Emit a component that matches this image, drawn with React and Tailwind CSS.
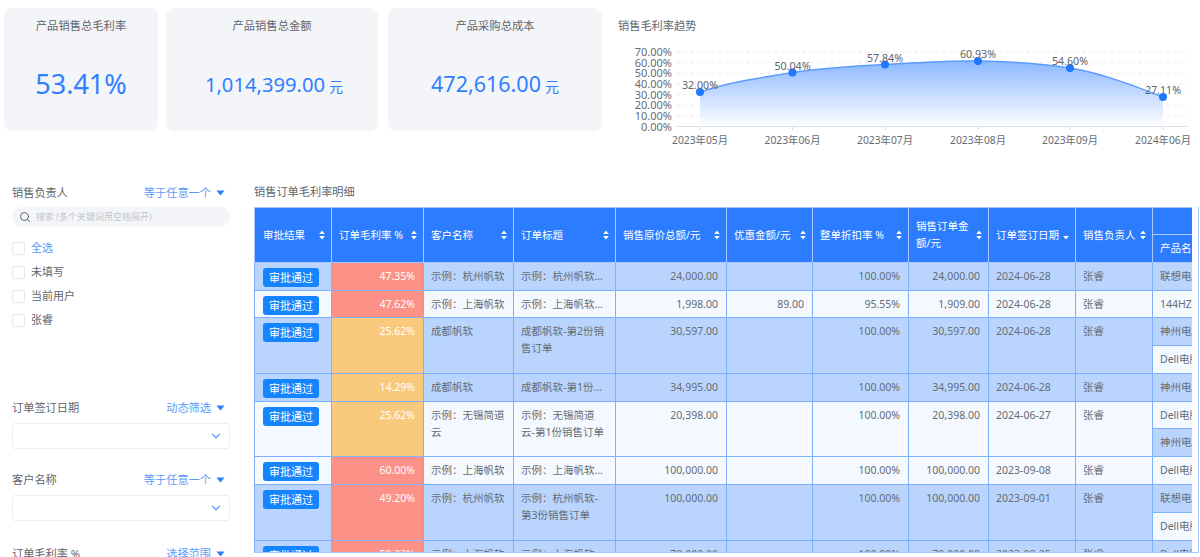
import React from "react";
import { Search, ChevronDown } from "lucide-react";

const Caret = () => (
  <svg width="9" height="6" viewBox="0 0 9 6" className="shrink-0 ml-[5px]"><path d="M0.5 0.5H8.5L4.5 5.5Z" fill="#2b7cff" /></svg>
);

const Sort = ({ onlyDown }) => (
  <svg width="6" height="10" viewBox="0 0 6 10" className="shrink-0">
    {!onlyDown && <path d="M3 0.5L5.8 4H0.2Z" fill="#fff" />}
    <path d="M3 9.5L5.8 6H0.2Z" fill="#fff" />
  </svg>
);

const Card = ({ title, className, children }) => (
  <div className={"flex flex-col items-center bg-[#f4f5f8] rounded-lg h-[123px] shrink-0 " + className}>
    <div className="text-[11.3px] leading-4 text-[#5f656d] mt-[10px]">{title}</div>
    <div className="mt-[32px] h-[36px] flex items-center text-[#2f7fff]">{children}</div>
  </div>
);

const pts = [
  [82, 53, "32.00%", "2023年05月"],
  [174.5, 33.5, "50.04%", "2023年06月"],
  [267, 25.5, "57.84%", "2023年07月"],
  [360, 22, "60.93%", "2023年08月"],
  [452, 29, "54.60%", "2023年09月"],
  [545, 58, "27.11%", "2024年06月"],
];
const curve = "M82 53C113 43 143 38.5 174.5 33.5C205 29 236 27 267 25.5C298 23.5 329 21.5 360 22C391 22.5 421 24 452 29C483 34 514 46 545 58";

const Chart = () => (
  <svg width="582" height="112" viewBox="0 0 582 112" className="block mt-[5px]">
    <defs>
      <linearGradient id="ga" x1="0" y1="0" x2="0" y2="1">
        <stop offset="0" stopColor="#8ab8ff" />
        <stop offset="1" stopColor="#ffffff" />
      </linearGradient>
    </defs>
    {[0, 1, 2, 3, 4, 5, 6, 7].map((i) => {
      const y = 87.5 - i * 10.65;
      return (
        <g key={i}>
          {i > 0 && <line x1="58" x2="570" y1={y} y2={y} stroke="#eeeeee" strokeDasharray="4 3" />}
          <text x="54" y={y + 4} textAnchor="end" fontSize="11" fill="#666c75">{i * 10}.00%</text>
        </g>
      );
    })}
    <path d={curve + "V87.5H82Z"} fill="url(#ga)" />
    <path d={curve} fill="none" stroke="#5d9bff" strokeWidth="1.5" />
    <line x1="58" x2="570" y1="87.5" y2="87.5" stroke="#dcdfe4" />
    {pts.map(([x, y, v, m]) => (
      <g key={m}>
        <line x1={x} x2={x} y1="87.5" y2="91" stroke="#dcdfe4" />
        <circle cx={x} cy={y} r="4" fill="#1f78ff" />
        <text x={x} y={y - 3} textAnchor="middle" fontSize="10.7" fill="#5e646e">{v}</text>
        <text x={x} y="105" textAnchor="middle" fontSize="10.3" fill="#666c75">{m}</text>
      </g>
    ))}
  </svg>
);

const FilterHead = ({ label, mode }) => (
  <div className="flex items-center justify-between h-4 pr-[5px]">
    <span className="text-[#5f656d] text-[11.2px]">{label}</span>
    <span className="flex items-center text-[#5b9bf8] text-[11.2px]">{mode}<Caret /></span>
  </div>
);

const Select = () => (
  <div className="mt-[7px] h-[26px] border border-[#eceef1] rounded-[3px] flex items-center justify-end pr-[6px]">
    <ChevronDown size={14} color="#5b9bf8" />
  </div>
);

const Check = ({ children, blue }) => (
  <div className="flex items-center h-6">
    <span className="w-[13px] h-[13px] border border-[#e6e8eb] rounded-[2px] mr-[6px]" />
    <span className={"text-[11px] " + (blue ? "text-[#5b9bf8]" : "text-[#5f656d]")}>{children}</span>
  </div>
);

const Filters = () => (
  <aside className="w-[218px] shrink-0 ml-3 pt-[25px]">
    <FilterHead label="销售负责人" mode="等于任意一个" />
    <div className="mt-[6px] h-5 rounded-full bg-[#f4f5f8] flex items-center pl-[7px]">
      <Search size={12} color="#5f6670" />
      <span className="ml-[5px] text-[9px] text-[#c3c6cc]">搜索 (多个关键词用空格隔开)</span>
    </div>
    <div className="mt-[9px]">
      <Check blue>全选</Check>
      <Check>未填写</Check>
      <Check>当前用户</Check>
      <Check>张睿</Check>
    </div>
    <div className="mt-[68px]">
      <FilterHead label="订单签订日期" mode="动态筛选" />
      <Select />
    </div>
    <div className="mt-[23px]">
      <FilterHead label="客户名称" mode="等于任意一个" />
      <Select />
    </div>
    <div className="mt-[25px]">
      <FilterHead label="订单毛利率 %" mode="选择范围" />
    </div>
  </aside>
);

const R = "bg-[#fb9187]";
const O = "bg-[#f9ca7d]";
const BLUE = "bg-[#b9d5fd]";
const LIGHT = "bg-[#f4f8ff]";

const rows = [
  { bg: BLUE, rate: "47.35%", rc: R, cust: "示例：杭州帆软", title: "示例：杭州帆软-第4份销售订单", a: "24,000.00", d: "", p: "100.00%", s: "24,000.00", date: "2024-06-28", prods: [["联想电脑", BLUE, "h-[28px]"]] },
  { bg: LIGHT, rate: "47.62%", rc: R, cust: "示例：上海帆软", title: "示例：上海帆软-第1份销售订单", a: "1,998.00", d: "89.00", p: "95.55%", s: "1,909.00", date: "2024-06-28", prods: [["144HZ显示器", LIGHT, "h-[27px]"]] },
  { bg: BLUE, rate: "25.62%", rc: O, cust: "成都帆软", title: "成都帆软-第2份销售订单", wrap: true, a: "30,597.00", d: "", p: "100.00%", s: "30,597.00", date: "2024-06-28", prods: [["神州电脑", BLUE, "h-[28px]"], ["Dell电脑", LIGHT, "h-[28px]"]] },
  { bg: BLUE, rate: "14.29%", rc: O, cust: "成都帆软", title: "成都帆软-第1份销售订单", a: "34,995.00", d: "", p: "100.00%", s: "34,995.00", date: "2024-06-28", prods: [["神州电脑", BLUE, "h-[28px]"]] },
  { bg: LIGHT, rate: "25.62%", rc: O, cust: "示例：无锡简道云", title: "示例：无锡简道云-第1份销售订单", wrap: true, a: "20,398.00", d: "", p: "100.00%", s: "20,398.00", date: "2024-06-27", prods: [["Dell电脑", LIGHT, "h-[27px]"], ["神州电脑", BLUE, "h-[28px]"]] },
  { bg: LIGHT, rate: "60.00%", rc: R, cust: "示例：上海帆软", title: "示例：上海帆软-第2份销售订单", a: "100,000.00", d: "", p: "100.00%", s: "100,000.00", date: "2023-09-08", prods: [["Dell电脑", LIGHT, "h-[28px]"]] },
  { bg: BLUE, rate: "49.20%", rc: R, cust: "示例：杭州帆软", title: "示例：杭州帆软-第3份销售订单", wrap: true, a: "100,000.00", d: "", p: "100.00%", s: "100,000.00", date: "2023-09-01", prods: [["联想电脑", BLUE, "h-[28px]"], ["Dell电脑", LIGHT, "h-[28px]"]] },
  { bg: BLUE, rate: "50.22%", rc: R, cust: "示例：上海帆软", title: "示例：上海帆软-第3份销售订单", a: "70,000.00", d: "", p: "100.00%", s: "70,000.00", date: "2023-08-25", prods: [["Dell电脑", BLUE, "h-[28px]"]] },
];

const th = "border border-[#a6c8ff] bg-[#2b7cff] text-white font-normal text-left text-[10.5px] leading-[17px] pl-[7px] first:pl-2 pr-[6px] align-middle";
const td = "border border-[#7fb0ff] text-[#666c75] text-[10.5px] leading-[17px] pl-[7px] first:pl-2 pr-[6px] pt-[5px] align-top";
const tdRight = "border border-[#7fb0ff] text-[#666c75] text-[10.5px] leading-[17px] pl-1 pr-2 pt-[5px] align-top text-right";

const Head = ({ children, down }) => (
  <th rowSpan={2} className={th}>
    <div className="flex items-center justify-between gap-0.5">
      <span>{children}</span>
      <Sort onlyDown={down} />
    </div>
  </th>
);

const Table = () => (
  <div className="flex-1 min-w-0 ml-6 mr-px pt-6">
    <div className="text-[11.2px] leading-4 text-[#5f656d] mb-[7px]">销售订单毛利率明细</div>
    <div className="h-[346px] border-r border-b border-[#a6c8ff] bg-white flex">
      <div className="w-[938px] overflow-hidden">
        <table className="table-fixed border-collapse w-[1018px]">
          <colgroup>
            <col className="w-[77px]" />
            <col className="w-[92px]" />
            <col className="w-[90px]" />
            <col className="w-[102px]" />
            <col className="w-[111px]" />
            <col className="w-[86px]" />
            <col className="w-[96px]" />
            <col className="w-[80px]" />
            <col className="w-[87px]" />
            <col className="w-[77px]" />
            <col className="w-[120px]" />
          </colgroup>
          <thead>
            <tr className="h-[27px]">
              <Head>审批结果</Head>
              <Head>订单毛利率 %</Head>
              <Head>客户名称</Head>
              <Head>订单标题</Head>
              <Head>销售原价总额/元</Head>
              <Head>优惠金额/元</Head>
              <Head>整单折扣率 %</Head>
              <Head>销售订单金额/元</Head>
              <Head down>订单签订日期</Head>
              <Head>销售负责人</Head>
              <th className={th} />
            </tr>
            <tr className="h-[28px]">
              <th className={th + " whitespace-nowrap !pl-[7px]"}>产品名称</th>
            </tr>
          </thead>
          <tbody>
            {rows.map((r, i) =>
              r.prods.map((pr, j) => (
                <tr key={i + "-" + j} className={pr[2]}>
                  {j === 0 && (
                    <>
                      <td rowSpan={r.prods.length} className={td + " " + r.bg}>
                        <span className="block w-14 h-[19px] rounded-[3px] bg-[#1585ff] text-white text-[11px] leading-[19px] text-center">审批通过</span>
                      </td>
                      <td rowSpan={r.prods.length} className={tdRight + " " + r.rc + " !text-white"}>{r.rate}</td>
                      <td rowSpan={r.prods.length} className={td + " " + r.bg}>{r.cust}</td>
                      <td rowSpan={r.prods.length} className={td + " " + r.bg + " !pr-[9px]"}>
                        <div className={r.wrap ? "" : "truncate"}>{r.title}</div>
                      </td>
                      <td rowSpan={r.prods.length} className={tdRight + " " + r.bg}>{r.a}</td>
                      <td rowSpan={r.prods.length} className={tdRight + " " + r.bg}>{r.d}</td>
                      <td rowSpan={r.prods.length} className={tdRight + " " + r.bg}>{r.p}</td>
                      <td rowSpan={r.prods.length} className={tdRight + " " + r.bg}>{r.s}</td>
                      <td rowSpan={r.prods.length} className={td + " " + r.bg}>{r.date}</td>
                      <td rowSpan={r.prods.length} className={td + " " + r.bg}>张睿</td>
                    </>
                  )}
                  <td className={td + " " + pr[1] + " whitespace-nowrap !pl-[7px]"}>{pr[0]}</td>
                </tr>
              ))
            )}
          </tbody>
        </table>
      </div>
    </div>
  </div>
);

export default function App() {
  return (
    <div className="w-[1200px] h-[557px] overflow-hidden bg-white font-['Noto_Sans','Noto_Sans_CJK_SC',sans-serif]">
      <div className="flex h-[160px] pt-2 pl-1">
        <Card title="产品销售总毛利率" className="w-[154px]">
          <span className="text-[27px]">53.41%</span>
        </Card>
        <Card title="产品销售总金额" className="w-[212px] ml-2">
          <span className="text-[20.2px] ml-1">1,014,399.00</span>
          <span className="text-[14px] ml-[4px] mt-1">元</span>
        </Card>
        <Card title="产品采购总成本" className="w-[214px] ml-[10px]">
          <span className="text-[21.5px]">472,616.00</span>
          <span className="text-[14px] ml-[4px] mt-1">元</span>
        </Card>
        <div className="ml-4 flex-1 min-w-0">
          <div className="text-[11.2px] leading-4 text-[#5f656d] mt-[10px]">销售毛利率趋势</div>
          <Chart />
        </div>
      </div>
      <div className="flex">
        <Filters />
        <Table />
      </div>
    </div>
  );
}
